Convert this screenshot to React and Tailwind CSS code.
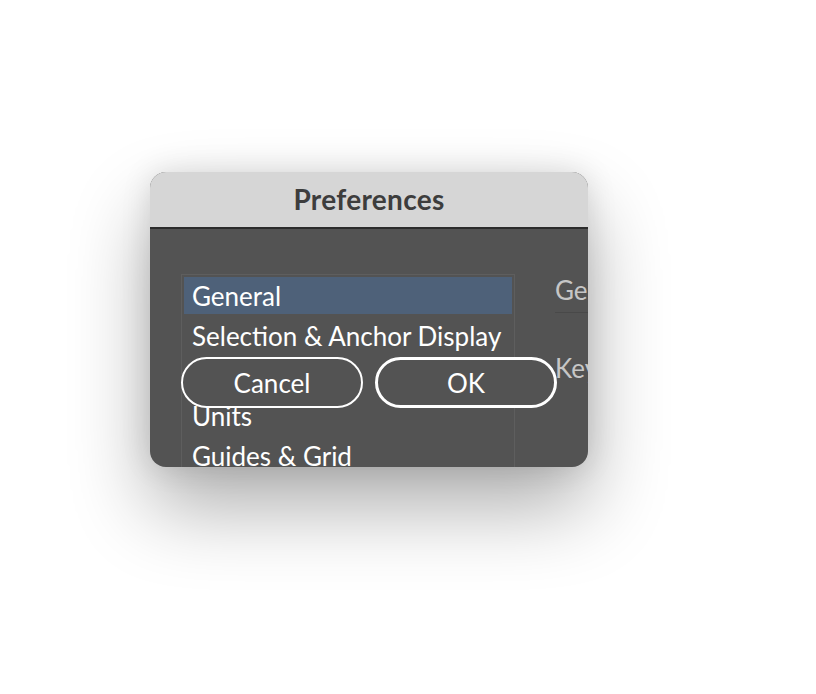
import React from "react";

const items = ["General", "Selection & Anchor Display", "Type", "Units", "Guides & Grid", "Smart Guides"];

export default function App() {
  return (
    <div className="w-[816px] h-[694px] bg-white relative overflow-hidden" style={{ fontFamily: "Lato, 'Open Sans', sans-serif" }}>
      <div className="pt-[172px] pl-[150px]">
        <div className="relative w-[438px] h-[295px] rounded-[16px] overflow-hidden bg-[#535353] shadow-[0_40px_80px_rgba(0,0,0,0.32),0_0_30px_rgba(0,0,0,0.12)]">
          {/* title bar */}
          <div className="h-[57px] bg-[#d6d6d6] border-b-2 border-[#2c2c2c] flex items-center justify-center pb-[2px]">
            <span className="text-[28px] font-bold text-[#3d3d3d] tracking-[0.3px]">Preferences</span>
          </div>

          {/* body */}
          <div className="flex pl-[31px] pt-[45px]">
            <div className="w-[334px] h-[260px] border border-[#5e5e5e] bg-[#535353] p-[2px] shrink-0">
              {items.map((t, i) => (
                <div
                  key={t}
                  className={`flex items-center pl-[8px] text-[26px] text-white leading-none whitespace-nowrap ${i === 0 ? "bg-[#4e6179] h-[37px] mb-[3px]" : "h-[40px] pb-[2px]"}`}
                >
                  {t}
                </div>
              ))}
            </div>
            <div className="ml-[40px] flex flex-col text-[26px] text-[#c6c6c6] leading-none whitespace-nowrap">
              <div className="pt-[3px] pb-[9px] border-b border-[#494949] w-[60px]">General</div>
              <div className="mt-[42px]">Keyboard</div>
            </div>
          </div>

          {/* buttons lying over the list */}
          <div className="absolute left-[31px] top-[185px] flex gap-[12px]">
            <button className="w-[182px] h-[51px] rounded-full border-2 border-white bg-[#535353] text-white text-[26px] leading-none">
              Cancel
            </button>
            <button className="w-[182px] h-[51px] rounded-full border-[3px] border-white bg-[#535353] text-white text-[26px] leading-none">
              OK
            </button>
          </div>
        </div>
      </div>
    </div>
  );
}
